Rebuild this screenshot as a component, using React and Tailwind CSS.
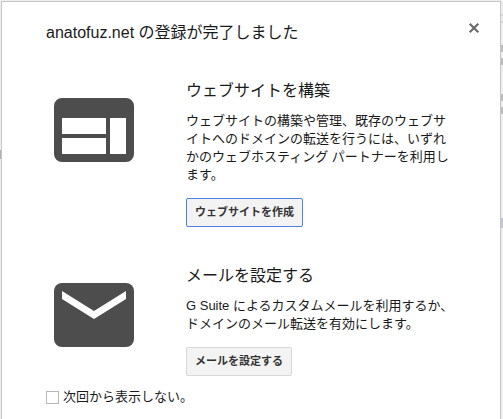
function WebsiteIcon() {
  return (
    <svg width="80" height="64" viewBox="0 0 80 64" aria-hidden="true">
      <path
        fill="#4d4d4d"
        fillRule="evenodd"
        d="M8 0H72A8 8 0 0 1 80 8V56A8 8 0 0 1 72 64H8A8 8 0 0 1 0 56V8A8 8 0 0 1 8 0ZM8 20V36H52V20ZM8 40V56H52V40ZM56 20V56H72V20Z"
      />
    </svg>
  );
}

function MailIcon() {
  return (
    <svg width="80" height="64" viewBox="0 0 80 64" aria-hidden="true">
      <rect width="80" height="64" rx="8" fill="#4d4d4d" />
      <path fill="#fff" d="M8 8L40 28L72 8V16L40 36L8 16Z" />
    </svg>
  );
}

function Section({ icon, title, text, action, focused }) {
  return (
    <section className="flex items-start gap-[52px] pl-2">
      <div className="mt-[17px] shrink-0">{icon}</div>
      <div className="min-w-0 flex-1">
        <h2 className="text-[16px] leading-[20px]">{title}</h2>
        <p className="mt-[11px] text-[13px] leading-[18px]">{text}</p>
        <button
          type="button"
          className={
            "mt-[14px] block h-[29px] rounded-[2px] border bg-[#f3f3f3] px-2 text-[11px] leading-[27px] font-bold text-[#333] " +
            (focused ? "border-[#4d80e0]" : "border-[#d8d8d8]")
          }
        >
          {action}
        </button>
      </div>
    </section>
  );
}

export default function App() {
  return (
    <div className="flex min-h-screen bg-[#eeeeee] pt-px font-['Liberation_Sans','Noto_Sans_CJK_JP',sans-serif] text-[#1a1a1a]">
      <div className="w-px" aria-hidden="true">
        <div className="mt-[149px] h-[9px] bg-[#b0b0b0]" />
      </div>
      <main
        role="dialog"
        aria-labelledby="dialog-title"
        className="min-w-0 flex-1 border-x border-t border-[#c6c6c6] bg-white"
      >
        <header className="flex items-start justify-between pt-5 pr-5 pl-11">
          <h1 id="dialog-title" className="pt-px text-[16px] leading-[20px]">
            anatofuz.net の登録が完了しました
          </h1>
          <button type="button" aria-label="閉じる" className="flex h-3 w-3 items-center justify-center">
            <svg width="12" height="12" viewBox="0 0 12 12" aria-hidden="true">
              <path d="M1.7 1.7L10.3 10.3M10.3 1.7L1.7 10.3" stroke="#6c6c6c" strokeWidth="2.2" fill="none" />
            </svg>
          </button>
        </header>
        <div className="flex flex-col gap-[39px] px-11 pt-[38px]">
          <Section
            icon={<WebsiteIcon />}
            title="ウェブサイトを構築"
            text="ウェブサイトの構築や管理、既存のウェブサイトへのドメインの転送を行うには、いずれかのウェブホスティング パートナーを利用します。"
            action="ウェブサイトを作成"
            focused
          />
          <Section
            icon={<MailIcon />}
            title="メールを設定する"
            text="G Suite によるカスタムメールを利用するか、ドメインのメール転送を有効にします。"
            action="メールを設定する"
          />
        </div>
        <div className="mt-3 flex items-center gap-1 px-11">
          <input
            id="hide-next"
            type="checkbox"
            className="h-[13px] w-[13px] appearance-none border border-[#b8b8b8] bg-white checked:bg-[#4d4d4d]"
          />
          <label htmlFor="hide-next" className="text-[13px] leading-[18px]">
            次回から表示しない。
          </label>
        </div>
      </main>
      <div className="flex w-[2px] flex-col" aria-hidden="true">
        <div className="mt-[13px] h-[2px] bg-[#d8d8d8]" />
        <div className="mt-[5px] h-[2px] bg-[#d8d8d8]" />
        <div className="mt-[22px] h-[7px] bg-[#bdbdbd]" />
        <div className="mt-[6px] h-[7px] bg-[#bdbdbd]" />
        <div className="mt-[29px] h-[7px] bg-[#bdbdbd]" />
        <div className="mt-[6px] h-[7px] bg-[#bdbdbd]" />
        <div className="mt-[104px] h-[10px] bg-[#c3c5d2]" />
      </div>
    </div>
  );
}
